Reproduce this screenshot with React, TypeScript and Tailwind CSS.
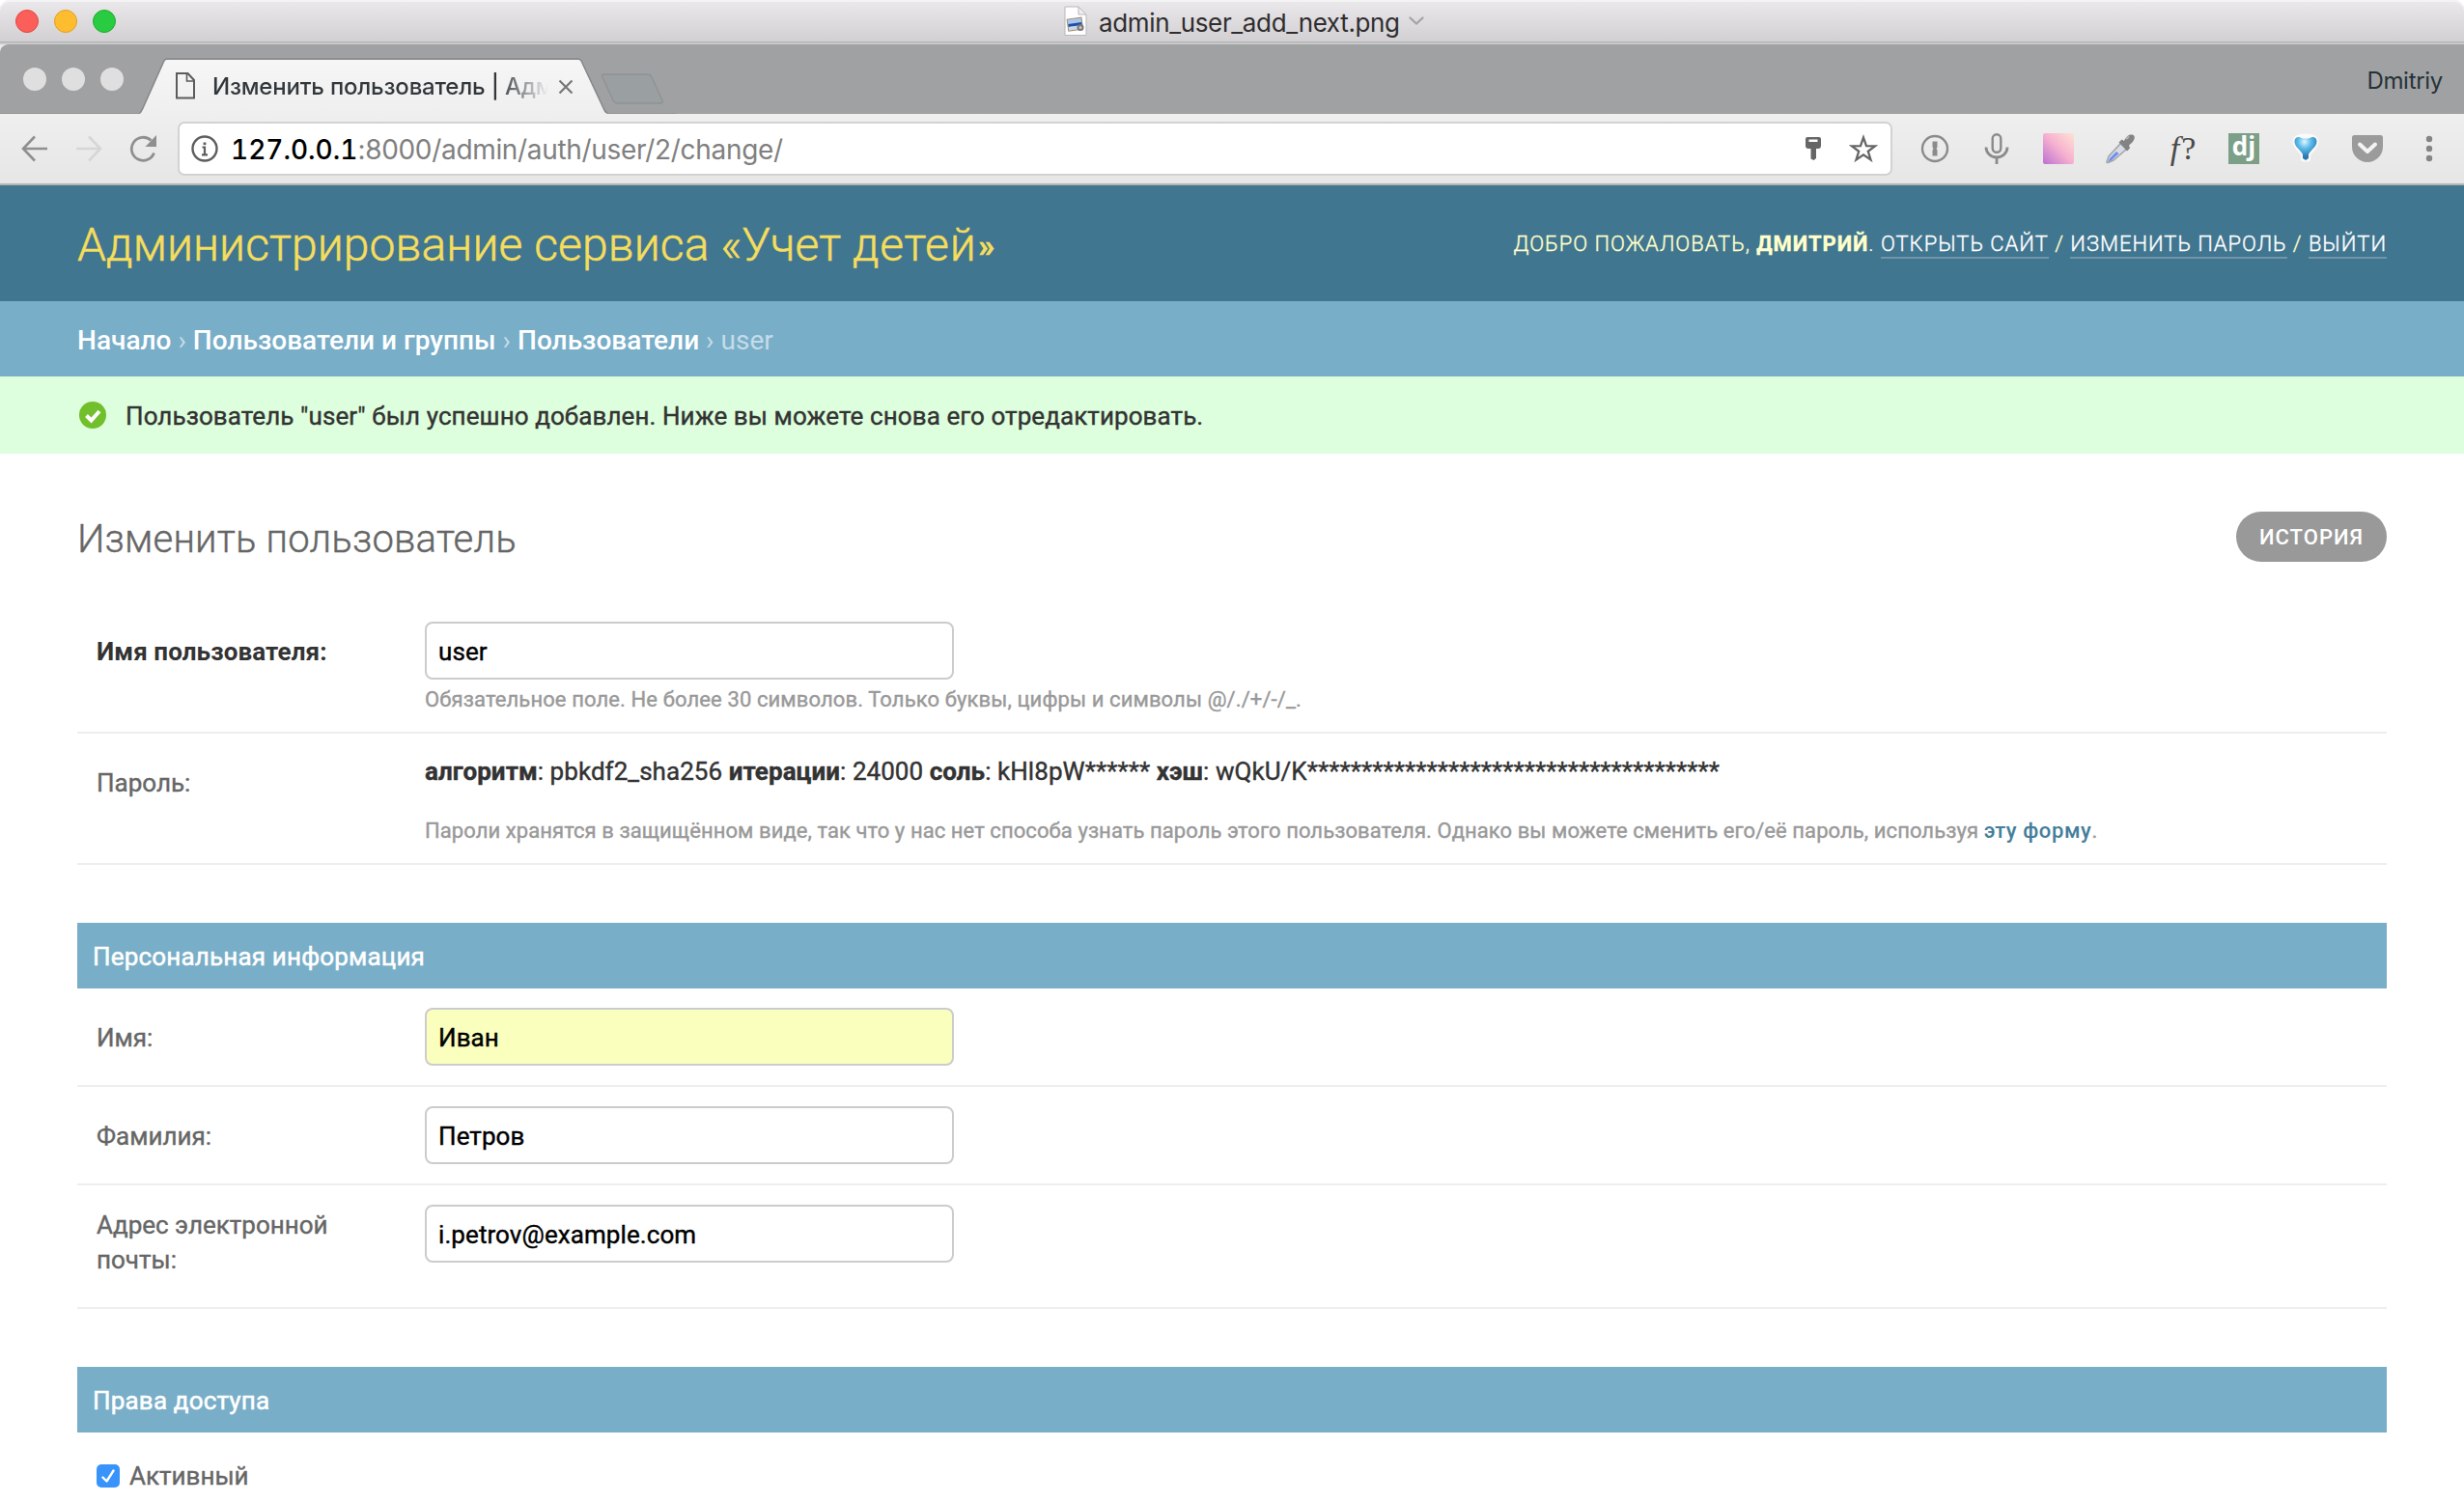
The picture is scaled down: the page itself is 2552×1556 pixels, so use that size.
import type { ReactNode } from 'react';

function FileIcon() {
  return (
    <svg width="24" height="32" viewBox="0 0 24 32" className="shrink-0">
      <path d="M1 1h14l8 8v21.5H1z" fill="#fff" stroke="#b9b7b9" strokeWidth="1" />
      <path d="M15 1v8h8z" fill="#efefef" stroke="#b9b7b9" strokeWidth="1" />
      <g transform="rotate(-8 12 20)">
        <rect x="4" y="13" width="15" height="12" fill="#a9c7ee" stroke="#a78d72" strokeWidth="1" />
        <path d="M4.500 18h14v3h-14z" fill="#1d4fa8" />
        <rect x="4.500" y="21" width="14" height="3.500" fill="#cfd6e0" />
      </g>
      <circle cx="17" cy="22.500" r="3.500" fill="#77777b" />
      <circle cx="17" cy="22.500" r="1.500" fill="#c9c9cc" />
    </svg>
  );
}

function TitleBar() {
  return (
    <div className="relative flex h-[46px] shrink-0 items-center rounded-t-[10px] border-b-2 border-[#c9c9ca] bg-linear-to-b from-[#ebe9eb] to-[#d1cfd1] shadow-[inset_0_2px_0_#f5f4f5,inset_0_-1px_0_#aeaeb0]">
      <div className="flex gap-4 pl-4">
        <i className="size-6 rounded-full border border-[#e2463f] bg-[#fc5f59]" />
        <i className="size-6 rounded-full border border-[#e0a023] bg-[#fdbd2f]" />
        <i className="size-6 rounded-full border border-[#1fad30] bg-[#29cb41]" />
      </div>
      <div className="ml-[982px] flex items-center">
        <FileIcon />
        <span className="mt-0.5 ml-3 w-[311px] text-[26px] tracking-[-0.35px] whitespace-nowrap text-[#2f2d2f]">admin_user_add_next.png</span>
        <svg width="16" height="10" viewBox="0 0 16 10" className="ml-2.5">
          <path d="M1.500 1.500L8 7.500l6.500-6" fill="none" stroke="#a3a2a4" strokeWidth="2.200" strokeLinecap="round" />
        </svg>
      </div>
    </div>
  );
}

function TabStrip() {
  return (
    <div className="relative flex h-[72px] shrink-0 items-center bg-[#a0a1a3]">
      <svg width="700" height="72" viewBox="0 0 700 72" className="absolute top-0 left-0">
        <defs>
          <linearGradient id="tab" x1="0" y1="0" x2="0" y2="1">
            <stop offset="0" stopColor="#f6f6f6" />
            <stop offset="1" stopColor="#efefef" />
          </linearGradient>
        </defs>
        <path d="M0 0h8C3 1 1 3 0 8z" fill="#e9e8e9" />
        <path d="M145 72c1-1 2-3 3-5l21-47c1-3 2-4 4-4h426c2 0 3 1 4 4l22 47c1 3 2 4 4 5z" fill="url(#tab)" />
        <path d="M145 71c1-1 2-3 3-5l21-47c1-3 2-4 4-4h426c2 0 3 1 4 4l22 47c1 3 2 4 4 5" fill="none" stroke="#87888a" strokeWidth="1.500" />
        <path d="M625 31h46c2 0 3 1 4 3l11 24c1 2 0 3-2 3h-45c-2 0-3-1-4-3l-11-24c-1-2-1-3 1-3z" fill="#9a9fa2" stroke="#909395" strokeWidth="1.500" />
        <path d="M0 71.500h145M629 71.500h71" stroke="#949597" />
      </svg>
      <div className="flex gap-4 pl-6">
        <i className="relative size-6 rounded-full bg-[#dfdfdf]" />
        <i className="relative size-6 rounded-full bg-[#dfdfdf]" />
        <i className="relative size-6 rounded-full bg-[#dfdfdf]" />
      </div>
      <div className="relative ml-[53px] flex h-full items-center pt-[15px]">
        <svg width="22" height="30" viewBox="0 0 22 30" className="-mt-[2px]">
          <path d="M2 2h11.500L20 9v18.500H2z" fill="none" stroke="#5c5c5c" strokeWidth="2" />
          <path d="M12.500 2v8H20" fill="none" stroke="#5c5c5c" strokeWidth="1.600" />
        </svg>
        <span className="ml-[17px] w-[348px] bg-linear-to-r from-[#31373b] from-[85%] to-transparent to-100% bg-clip-text pt-px text-[24px] font-[450] tracking-[-0.22px] whitespace-nowrap text-transparent">
          Изменить пользователь | Адм
        </span>
        <svg width="16" height="16" viewBox="0 0 16 16" className="ml-[10px]">
          <path d="M1.500 1.500l13 13M14.500 1.500l-13 13" stroke="#777" strokeWidth="2.200" />
        </svg>
      </div>
      <span className="mt-1 mr-[22px] ml-auto text-[24px] tracking-[-0.3px] text-[#263238]">Dmitriy</span>
    </div>
  );
}

function Cell({ children }: { children: ReactNode }) {
  return <div className="flex w-16 shrink-0 items-center justify-center">{children}</div>;
}

function Toolbar() {
  return (
    <div className="flex h-[74px] shrink-0 items-center border-b-2 border-[#b4b4b4] bg-linear-to-b from-[#efefef] to-[#e6e6e6]">
      <svg width="28" height="28" viewBox="0 0 28 28" className="ml-[22px]">
        <path d="M27 14H2.500M14 1.500L2 14l12 12.500" fill="none" stroke="#8f8f8f" strokeWidth="2.600" />
      </svg>
      <svg width="28" height="28" viewBox="0 0 28 28" className="ml-7">
        <path d="M1 14h24.500M14 1.500L26 14 14 26.500" fill="none" stroke="#d6d6d6" strokeWidth="2.600" />
      </svg>
      <svg width="30" height="30" viewBox="0 0 30 30" className="ml-7">
        <path d="M25.500 19.500A12 12 0 1 1 22.500 6.500" fill="none" stroke="#8f8f8f" strokeWidth="2.800" />
        <path d="M28 1v12H16.500z" fill="#8f8f8f" />
      </svg>
      <div className="ml-5 flex h-14 w-[1776px] items-center rounded-[7px] border-2 border-[#d2d2d2] bg-white">
        <svg width="28" height="28" viewBox="0 0 28 28" className="ml-3">
          <circle cx="14" cy="14" r="12.500" fill="none" stroke="#5e5e5e" strokeWidth="2.400" />
          <path d="M11.500 12.500H14V20M11 20.300h6" fill="none" stroke="#5e5e5e" strokeWidth="2.200" />
          <rect x="12.600" y="7.500" width="2.800" height="2.600" fill="#5e5e5e" />
        </svg>
        <span className="mt-0.5 ml-[13px] text-[28px] tracking-[-0.32px] whitespace-nowrap text-[#808080]">
          <span className="font-medium tracking-normal text-black tabular-nums">127.0.0.1</span>:8000/admin/auth/user/2/change/
        </span>
        <div className="mr-[13px] ml-auto flex items-center gap-[28px]">
          <svg width="18" height="26" viewBox="0 0 18 26">
            <path d="M3 1h12a2 2 0 0 1 2 2v7c0 2-1 3-3 3h-2v10l-2.500 2-3-1.500V13H4c-2 0-3-1-3-3V3a2 2 0 0 1 2-2z" fill="#666" />
            <rect x="4.500" y="3.500" width="9" height="2.500" fill="#fff" />
          </svg>
          <svg width="30" height="30" viewBox="0 0 30 30">
            <path d="M15 3.500l3 8.700 9 .2-7.200 5.400 2.700 8.700L15 21.300l-7.500 5.200 2.700-8.700L3 12.400l9-.2z" fill="none" stroke="#666" strokeWidth="2.300" />
          </svg>
        </div>
      </div>
      <div className="ml-[12px] flex">
        <Cell>
          <svg width="30" height="30" viewBox="0 0 30 30">
            <circle cx="15" cy="15" r="13" fill="none" stroke="#8b8b8b" strokeWidth="2.400" />
            <path d="M12.500 7.500h5v6l-1 1.500 1 1.500v6h-5v-6l1-1.500-1-1.500z" fill="#8b8b8b" />
          </svg>
        </Cell>
        <Cell>
          <svg width="26" height="32" viewBox="0 0 26 32">
            <rect x="8.700" y="1.300" width="8.600" height="18.500" rx="4.300" fill="none" stroke="#8b8b8b" strokeWidth="2.400" />
            <path d="M2 14.500c0 6 5 10.500 11 10.500s11-4.500 11-10.500M13 25v7" fill="none" stroke="#8b8b8b" strokeWidth="2.800" />
          </svg>
        </Cell>
        <Cell>
          <div className="size-8 rounded-[2px] bg-linear-to-tr from-[#bd6fd0] via-[#f6b0cf] to-[#fde3d4]" />
        </Cell>
        <Cell>
          <svg width="32" height="32" viewBox="0 0 32 32">
            <path d="M17 10l6 6L9 28l-6 2.500L2 30l2-6z" fill="#d9dce4" stroke="#a5a6aa" strokeWidth="1.600" />
            <path d="M12 19l2.500 2L7 28l-3.500 1.500L5 26z" fill="#6d8ff0" />
            <path d="M14.500 9.500l3-3 2.500 1.500c2-4 4-6.500 7.500-6.500 2.500 0 4 2 3 4.500-.8 2.500-3 4.500-5.500 6.500l1 3-3 3z" fill="#838383" />
            <path d="M22 6l3-2.500" stroke="#b5b5b5" strokeWidth="2" />
          </svg>
        </Cell>
        <Cell>
          <span className="pl-1 font-['Liberation_Serif',serif] text-[34px] leading-8 tracking-[2px] text-[#4a4a4a]">
            <em>f</em>?
          </span>
        </Cell>
        <Cell>
          <div className="flex size-8 items-center justify-center bg-[#7c9f88] font-['Open_Sans',sans-serif] text-[26px] leading-8 font-bold text-white">
            <span className="-mt-1.5">dj</span>
          </div>
        </Cell>
        <Cell>
          <svg width="32" height="34" viewBox="0 0 32 34">
            <defs>
              <radialGradient id="drop" cx="0.450" cy="0.200" r="0.650">
                <stop offset="0" stopColor="#e2f6fd" />
                <stop offset="0.450" stopColor="#5bbcea" />
                <stop offset="1" stopColor="#2b78ae" />
              </radialGradient>
            </defs>
            <path d="M5 10c0-5 5-6 11-6s11 1 11 6c0 5-7 10-8.500 13v5h-5v-5C12 20 5 15 5 10z" fill="#fafafa" stroke="#fafafa" strokeWidth="5" strokeLinejoin="round" />
            <path d="M4.500 10c0-4 2-5 5-5 2 1 4 1.500 6.500 1.500S20.500 6 22.500 5c3 0 5 1 5 5 0 5-7.500 9.500-8.500 13v4l-3 2-3-2v-4C12 19.500 4.500 15 4.500 10z" fill="url(#drop)" />
          </svg>
        </Cell>
        <Cell>
          <svg width="32" height="28" viewBox="0 0 32 28">
            <path d="M2.500 0h27A2.500 2.500 0 0 1 32 2.500V12a16 16 0 0 1-32 0V2.500A2.500 2.500 0 0 1 2.500 0z" fill="#9b9b9b" />
            <path d="M8 9.500l8 7.500 8-7.500" fill="none" stroke="#f4f4f4" strokeWidth="4" strokeLinecap="round" strokeLinejoin="round" />
          </svg>
        </Cell>
        <Cell>
          <svg width="8" height="28" viewBox="0 0 8 28">
            <circle cx="4" cy="4" r="3.200" fill="#858585" />
            <circle cx="4" cy="14" r="3.200" fill="#858585" />
            <circle cx="4" cy="24" r="3.200" fill="#858585" />
          </svg>
        </Cell>
      </div>
    </div>
  );
}

function ToolLink({ children }: { children: ReactNode }) {
  return <a className="inline-block h-[30px] border-b-2 border-[#7195ab] text-white">{children}</a>;
}

function SiteHeader() {
  return (
    <header className="flex h-30 shrink-0 items-center justify-between bg-[#417690] px-20">
      <h1 className="mt-[3px] text-[48px] leading-[60px] font-light tracking-[0.1px] text-[#f5dd5d] [-webkit-text-stroke:0.5px]">
        Администрирование сервиса «Учет <span className="tracking-[0.7px]">детей</span>
        <span className="ml-0.5 inline-block -translate-y-1 text-[34px] leading-none font-bold">»</span>
      </h1>
      <div className="pt-px text-[22px] leading-[30px] font-light tracking-[0.97px] whitespace-pre text-[#ffc] uppercase [-webkit-text-stroke:0.35px]">
        Добро пожаловать, <b className="font-bold">Дмитрий</b>. <ToolLink>Открыть сайт</ToolLink> / <ToolLink>Изменить пароль</ToolLink> / <ToolLink>Выйти</ToolLink>
      </div>
    </header>
  );
}

function TextField({ value, yellow }: { value: string; yellow?: boolean }) {
  return (
    <div className={`flex h-[60px] w-[548px] items-center rounded-lg border-2 border-[#ccc] px-3 pt-0.5 text-[26px] tracking-[0.08px] text-black ${yellow ? 'bg-[#faffbd]' : 'bg-white'}`}>
      {value}
    </div>
  );
}

function Row({ label, strong, value, yellow, help, className = '' }: { label: string; strong?: boolean; value: string; yellow?: boolean; help?: string; className?: string }) {
  return (
    <div className={`flex border-b-2 border-[#eee] px-5 pt-5 ${className}`}>
      <label className={`mt-px w-[340px] shrink-0 text-[26px] leading-[60px] ${strong ? 'font-bold tracking-[0.1px] text-[#333] [-webkit-text-stroke:0px]' : 'text-[#666]'}`}>{label}</label>
      <div>
        <TextField value={value} yellow={yellow} />
        {help && <p className="mt-1 text-[22px] leading-[34px] tracking-[0.11px] whitespace-nowrap text-[#999]">{help}</p>}
      </div>
    </div>
  );
}

function SectionTitle({ children }: { children: ReactNode }) {
  return <h2 className="flex h-[68px] shrink-0 items-center bg-[#79aec8] px-4 pt-0.5 text-[26px] tracking-[0.18px] text-white [-webkit-text-stroke:0.5px]">{children}</h2>;
}

export default function App() {
  return (
    <div className="flex h-[1556px] w-[2552px] flex-col overflow-hidden bg-white font-['Inter',sans-serif]">
      <TitleBar />
      <TabStrip />
      <Toolbar />
      <div className="flex flex-1 flex-col font-['Roboto',sans-serif]">
        <SiteHeader />
        <nav className="flex h-[78px] shrink-0 items-center bg-[#79aec8] px-20 pt-[3px] text-[28px] tracking-[0.02px] whitespace-pre text-[#c4dce8]">
          <span className="font-medium text-white">Начало</span> › <span className="font-medium text-white">Пользователи и группы</span> ›{' '}
          <span className="font-medium text-white">Пользователи</span> › <span>user</span>
        </nav>
        <div className="flex h-20 shrink-0 items-center bg-[#dfd] px-20 text-[26px] tracking-[0.08px] text-[#333] [-webkit-text-stroke:0.4px]">
          <svg width="32" height="28" viewBox="0 0 32 28" className="mr-[18px]">
            <circle cx="16" cy="14" r="14" fill="#70bf2b" />
            <path d="M9.500 14.500l5 5 8.500-9.500" fill="none" stroke="#fff" strokeWidth="4" />
          </svg>
          <span className="pt-0.5">Пользователь "user" был успешно добавлен. Ниже вы можете снова его отредактировать.</span>
        </div>
        <main className="flex flex-col px-20 pt-[60px] [-webkit-text-stroke:0.4px]">
          <div className="flex h-[94px] items-start justify-between">
            <h1 className="-mt-px text-[40px] leading-[60px] font-light tracking-[0.2px] text-[#666]">Изменить пользователь</h1>
            <a className="flex h-[52px] w-[156px] items-center justify-center rounded-full bg-[#999] text-[22px] font-medium tracking-[1px] text-white [-webkit-text-stroke:0px]">ИСТОРИЯ</a>
          </div>
          <Row className="h-[136px]" label="Имя пользователя:" strong value="user" help="Обязательное поле. Не более 30 символов. Только буквы, цифры и символы @/./+/-/_." />
          <div className="flex h-[136px] border-b-2 border-[#eee] px-5 pt-5">
            <label className="w-[340px] shrink-0 pt-3 text-[26px] leading-[38px] text-[#666]">Пароль:</label>
            <div className="whitespace-nowrap">
              <p className="text-[26px] leading-[38px] tracking-[0.05px] text-[#333]">
                <b>алгоритм</b>: pbkdf2_sha256 <b>итерации</b>: 24000 <b>соль</b>: kHl8pW****** <b>хэш</b>: wQkU/K**************************************
              </p>
              <p className="mt-[26px] text-[22px] leading-[34px] tracking-[0.075px] text-[#999]">
                Пароли хранятся в защищённом виде, так что у нас нет способа узнать пароль этого пользователя. Однако вы можете сменить его/её пароль, используя{' '}
                <a className="font-medium tracking-[0.6px] text-[#447e9b] [-webkit-text-stroke:0px]">эту форму</a>.
              </p>
            </div>
          </div>
          <div className="mt-[60px] flex flex-col">
            <SectionTitle>Персональная информация</SectionTitle>
            <Row className="h-[102px]" label="Имя:" value="Иван" yellow />
            <Row className="h-[102px]" label="Фамилия:" value="Петров" />
            <div className="flex h-[128px] border-b-2 border-[#eee] px-5 pt-5">
              <label className="w-[340px] shrink-0 pt-[3px] text-[26px] leading-9 text-[#666]">
                Адрес электронной
                <br />
                почты:
              </label>
              <TextField value="i.petrov@example.com" />
            </div>
          </div>
          <div className="mt-[60px] flex flex-col">
            <SectionTitle>Права доступа</SectionTitle>
            <label className="flex items-center px-5 pt-[26px] text-[26px] leading-9 text-[#666]">
              <svg width="24" height="24" viewBox="0 0 24 24" className="mr-2.5">
                <rect width="24" height="24" rx="5" fill="#3894fb" />
                <path d="M6.500 13.500l4 4L17.500 6.500" fill="none" stroke="#fff" strokeWidth="2.400" strokeLinecap="round" strokeLinejoin="round" />
              </svg>
              <span className="pt-px">Активный</span>
            </label>
          </div>
        </main>
      </div>
    </div>
  );
}
